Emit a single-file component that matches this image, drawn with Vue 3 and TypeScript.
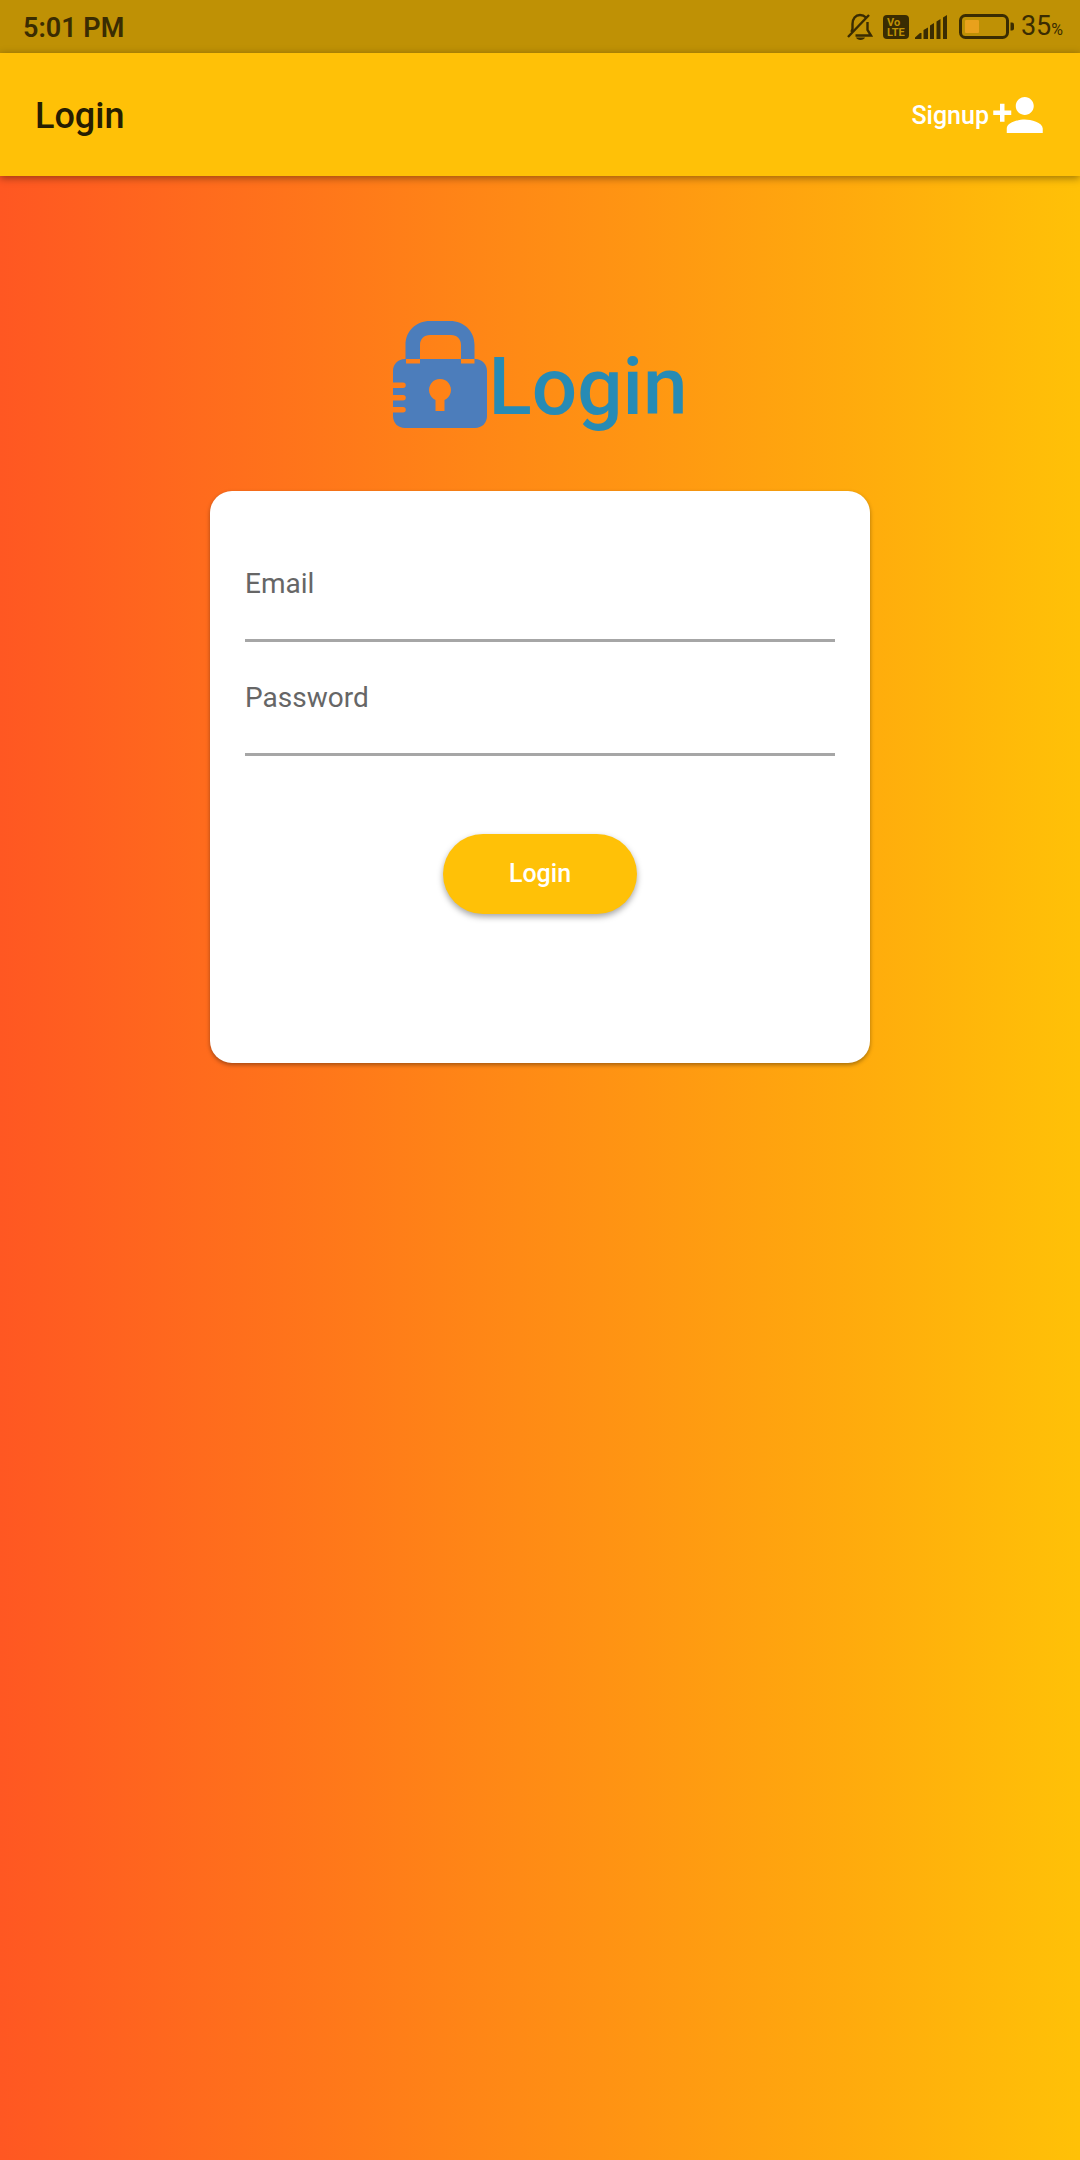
<script setup lang="ts">
import { ref } from 'vue'

interface Field {
  id: string
  label: string
  type: string
  autocomplete: string
}

const fields: Field[] = [
  { id: 'email', label: 'Email', type: 'email', autocomplete: 'email' },
  { id: 'password', label: 'Password', type: 'password', autocomplete: 'current-password' },
]

const values = ref<Record<string, string>>({ email: '', password: '' })
const battery = 35
</script>

<template>
  <div class="screen">
    <div class="status">
      <span class="time">5:01 PM</span>
      <div class="indicators">
        <svg class="bell" width="26" height="28" viewBox="0 0 26 28" fill="none" stroke="currentColor" stroke-width="2.4" aria-hidden="true">
          <path d="M5.500 17V11C5.500 5.500 8.500 2 13 2C15.500 2 17.500 3 19 4.500M20.500 9V17L24 22.500H8.500M5.500 16L4.500 19" />
          <path d="M1 24L22 2" />
          <path d="M9 24.500H18C17.500 26 15.500 27 13.500 27C11.500 27 9.500 26 9 24.500Z" fill="currentColor" stroke="none" />
        </svg>
        <svg class="volte" width="26" height="24" viewBox="0 0 26 24" aria-hidden="true">
          <rect width="26" height="24" rx="4" fill="currentColor" />
          <text x="4" y="11">Vo</text>
          <text x="4" y="21">LTE</text>
        </svg>
        <svg class="signal" width="32" height="24" viewBox="0 0 32 24" fill="currentColor" aria-hidden="true">
          <path d="M0 24V22.500L5 18H6.500V24ZM8.500 24V15L13 12.500V24ZM15 24V10.500L19 8V24ZM21.500 24V6.500L25.500 4V24ZM28 24V2.500L32 0V24Z" />
        </svg>
        <svg class="battery" width="55" height="25" viewBox="0 0 55 25" aria-hidden="true">
          <rect x="1.500" y="1.500" width="47" height="22" rx="5" fill="none" stroke="currentColor" stroke-width="3" />
          <rect x="6" y="6" width="14" height="13" rx="1" fill="#e9a11c" />
          <path d="M51.500 8.500H53Q55 8.500 55 10.500V14.500Q55 16.500 53 16.500H51.500Z" fill="currentColor" />
        </svg>
        <span class="level">{{ battery }}<small>%</small></span>
      </div>
    </div>

    <header class="appbar">
      <h1>Login</h1>
      <a class="signup" href="#signup">
        <span>Signup</span>
        <svg width="54" height="54" viewBox="0 0 24 24" fill="currentColor" aria-hidden="true">
          <path d="M15 12c2.210 0 4-1.790 4-4s-1.790-4-4-4-4 1.790-4 4 1.790 4 4 4zm-9-2V7H4v3H1v2h3v3h2v-3h3v-2H6zm9 4c-2.670 0-8 1.340-8 4v2h16v-2c0-2.660-5.330-4-8-4z" />
        </svg>
      </a>
    </header>

    <main>
      <div class="logo">
        <svg width="94" height="108" viewBox="0 0 94 108" aria-hidden="true">
          <path
            fill="#4c7dbb"
            fill-rule="evenodd"
            d="M12.500 38V24C12.500 10 23 0 37 0H57C71 0 81.500 10 81.500 24V38H82C89 38 94 43 94 50V95C94 102 89 107 82 107H12C5 107 0 102 0 95V91.500H10A2.700 2.700 0 0 0 10 86H0V79.500H10A2.700 2.700 0 0 0 10 74H0V67H10A2.700 2.700 0 0 0 10 61.500H0V50C0 43 5 38 12 38ZM27 38H68V24C68 18 64 14 58 14H37C31 14 27 18 27 24ZM13 38V42.500H27V38ZM68 38V42.500H81.500V38ZM42.500 79V90H51.500V79A11 11 0 1 0 42.500 79Z"
          />
        </svg>
        <span>Login</span>
      </div>

      <form class="card" @submit.prevent>
        <div v-for="field in fields" :key="field.id" class="field">
          <label :for="field.id">{{ field.label }}</label>
          <input :id="field.id" v-model="values[field.id]" :type="field.type" :autocomplete="field.autocomplete" />
        </div>
        <button type="submit">Login</button>
      </form>
    </main>
  </div>
</template>

<style>
body {
  margin: 0;
}
</style>

<style scoped>
.screen {
  display: flex;
  flex-direction: column;
  min-height: 100vh;
  background: linear-gradient(to right, #ff5722, #ffc107);
  font-family: Roboto, "Liberation Sans", sans-serif;
}

.status {
  display: flex;
  align-items: center;
  justify-content: space-between;
  box-sizing: border-box;
  height: 53px;
  padding: 0 17px 0 23px;
  background: #bf9105;
  color: #3a2c02;
}

.time {
  padding-top: 2px;
  font-size: 27px;
  font-weight: 600;
  line-height: 32px;
}

.indicators {
  display: flex;
  align-items: center;
}

.volte {
  margin-left: 10px;
}

.volte text {
  fill: #bf9105;
  font-size: 11px;
  font-weight: 700;
}

.signal {
  margin-left: 6px;
}

.battery {
  margin-left: 12px;
}

.level {
  margin-left: 7px;
  padding-top: 2px;
  font-size: 27px;
  line-height: 32px;
}

.level small {
  font-size: 16px;
}

.appbar {
  display: flex;
  align-items: center;
  justify-content: space-between;
  box-sizing: border-box;
  height: 123px;
  padding: 0 35px;
  background: #ffc107;
  box-shadow: 0 2px 8px rgba(0, 0, 0, 0.4);
}

h1 {
  margin: 0;
  padding-top: 2px;
  color: #261d01;
  font-size: 36px;
  font-weight: 500;
  line-height: 42px;
}

.signup {
  display: flex;
  align-items: center;
  gap: 2px;
  color: #fff;
  font-size: 25px;
  font-weight: 500;
  line-height: 32px;
  text-decoration: none;
}

.signup span {
  padding-top: 2px;
}

main {
  padding: 145px 210px 0;
}

.logo {
  display: flex;
  justify-content: center;
  gap: 2px;
  height: 108px;
}

.logo span {
  color: #278bb5;
  font-size: 80px;
  font-weight: 500;
  line-height: 132px;
}

.card {
  display: flex;
  flex-direction: column;
  gap: 39px;
  margin-top: 62px;
  padding: 76px 35px 149px;
  border-radius: 22px;
  background: #fff;
  box-shadow: 0 2px 4px rgba(0, 0, 0, 0.35);
}

.field {
  display: flex;
  flex-direction: column;
}

.field label {
  color: #666;
  font-size: 28px;
  line-height: 34px;
}

.field input {
  box-sizing: border-box;
  width: 100%;
  height: 41px;
  padding: 0;
  border: 0;
  border-bottom: 3px solid #a6a6a6;
  outline: 0;
  background: transparent;
  font: inherit;
  font-size: 28px;
}

.card button {
  align-self: center;
  width: 194px;
  height: 80px;
  margin-top: 39px;
  padding: 0;
  border: 0;
  border-radius: 40px;
  background: #ffc107;
  box-shadow: 0 3px 6px rgba(0, 0, 0, 0.35);
  color: #fff;
  font-family: inherit;
  font-size: 25px;
  font-weight: 500;
  line-height: 32px;
}
</style>
